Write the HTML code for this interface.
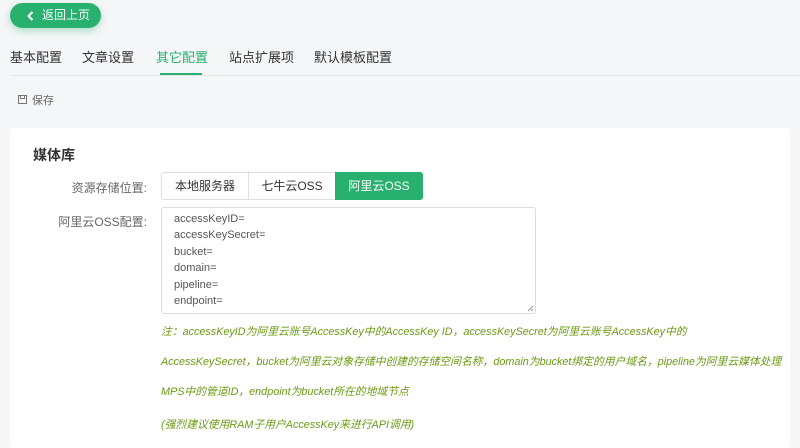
<!DOCTYPE html><html><head><meta charset="utf-8"><style>
body{margin:0;width:800px;height:443px;overflow:hidden;background:#f5f6f8;font-family:"Liberation Sans","Noto Sans CJK SC",sans-serif;position:relative;color:#333}
.a{position:absolute}
.back{left:10px;top:3px;width:91px;height:25px;background:#27b06e;border-radius:13px;color:#fff;font-size:12px;line-height:25px;box-shadow:0 3px 8px rgba(39,176,110,.35)}
.tab{top:47px;font-size:13px;color:#333}
.lbl{font-size:12px;color:#666;text-align:right;width:140px;left:7px}
.note{left:161px;font-size:10.8px;color:#6a9a12;font-style:italic;white-space:nowrap}
</style></head><body>
<div class="a back"><svg class="a" style="left:17px;top:8px" width="7" height="10"><path d="M5.5 1L1.5 5l4 4" stroke="#fff" stroke-width="2" fill="none"/></svg><span class="a" style="left:32px;top:0">返回上页</span></div>
<div class="a tab" style="left:10px">基本配置</div>
<div class="a tab" style="left:82px">文章设置</div>
<div class="a tab" style="left:156px;color:#27b06e">其它配置</div>
<div class="a tab" style="left:229px">站点扩展项</div>
<div class="a tab" style="left:314px">默认模板配置</div>
<div class="a" style="left:10px;top:75px;width:790px;height:1px;background:#e2e4e8"></div>
<div class="a" style="left:160px;top:73px;width:42px;height:2px;background:#27b06e"></div>
<svg class="a" style="left:18px;top:95px" width="9" height="9"><rect x=".5" y=".5" width="8" height="8" fill="none" stroke="#777"/><rect x="2.5" y=".5" width="4" height="3" fill="none" stroke="#777"/></svg>
<div class="a" style="left:32px;top:92px;font-size:11px;color:#666">保存</div>
<div class="a" style="left:10px;top:128px;width:780px;height:320px;background:#fff;border-radius:3px"></div>
<div class="a" style="left:33px;top:145px;font-size:14px;font-weight:bold;color:#333">媒体库</div>
<div class="a lbl" style="top:179px">资源存储位置:</div>
<div class="a" style="left:161px;top:172px;width:262px;height:28px;border:1px solid #e0e0e0;border-radius:3px;box-sizing:border-box;font-size:12px;line-height:26px">
<span class="a" style="left:0;width:86px;text-align:center;color:#333">本地服务器</span>
<span class="a" style="left:86px;width:1px;height:26px;background:#e0e0e0"></span>
<span class="a" style="left:87px;width:86px;text-align:center;color:#333">七牛云OSS</span>
<span class="a" style="left:173px;top:-1px;width:88px;height:28px;line-height:28px;text-align:center;background:#27b06e;color:#fff;border-radius:0 3px 3px 0">阿里云OSS</span></div>
<div class="a lbl" style="top:213px">阿里云OSS配置:</div>
<div class="a" style="left:161px;top:207px;width:375px;height:107px;border:1px solid #ddd;border-radius:3px;box-sizing:border-box;font-size:11px;color:#555;line-height:16.4px;padding:3px 12px">accessKeyID=<br>accessKeySecret=<br>bucket=<br>domain=<br>pipeline=<br>endpoint=
<svg class="a" style="right:1px;bottom:1px" width="7" height="7"><path d="M6 1L1 6M6 4L4 6" stroke="#999"/></svg></div>
<div class="a note" style="top:323px">注：accessKeyID为阿里云账号AccessKey中的AccessKey ID，accessKeySecret为阿里云账号AccessKey中的</div>
<div class="a note" style="top:353px">AccessKeySecret，bucket为阿里云对象存储中创建的存储空间名称，domain为bucket绑定的用户域名，pipeline为阿里云媒体处理</div>
<div class="a note" style="top:383px">MPS中的管道ID，endpoint为bucket所在的地域节点</div>
<div class="a note" style="top:416px">(强烈建议使用RAM子用户AccessKey来进行API调用)</div>
</body></html>
